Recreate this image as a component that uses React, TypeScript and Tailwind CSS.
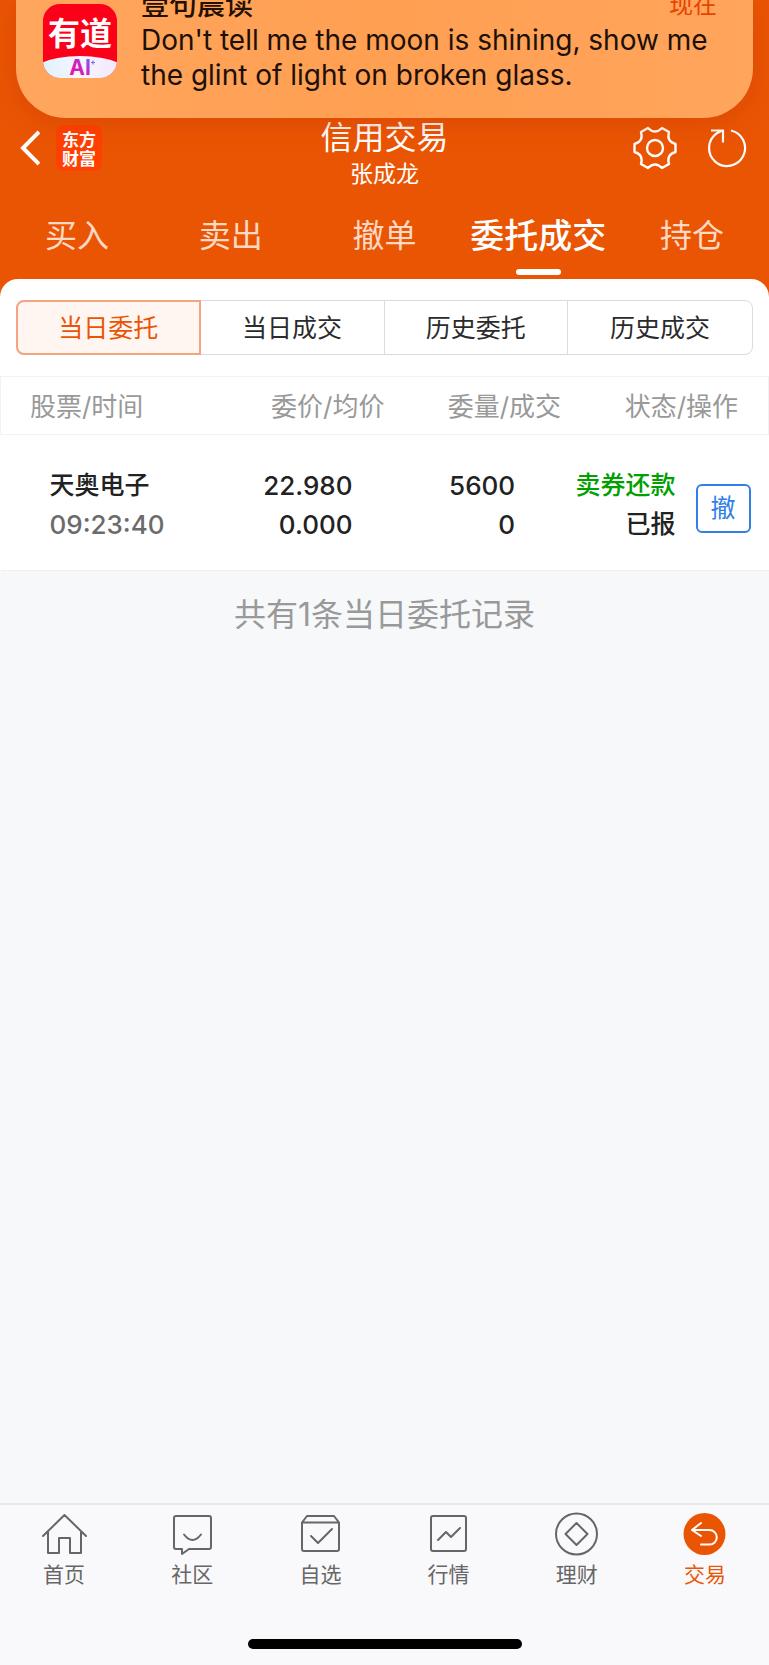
import type { ReactNode } from "react";

const tabs = ["买入", "卖出", "撤单", "委托成交", "持仓"];
const filters = ["当日委托", "当日成交", "历史委托", "历史成交"];

const orders = [
  {
    name: "天奥电子",
    time: "09:23:40",
    price: "22.980",
    average: "0.000",
    amount: "5600",
    filled: "0",
    type: "卖券还款",
    status: "已报",
  },
];

function Notification() {
  return (
    <div className="absolute inset-x-4 top-0 z-10 h-[118px] overflow-hidden rounded-b-[50px] bg-linear-to-r from-[#ffa65e] via-[#ff9f52] to-[#ffa55c] shadow-[0_4px_28px_rgba(190,50,0,0.35)]">
      <div className="flex gap-6 pr-8 pl-[27px]">
        <svg viewBox="0 0 74 74" className="mt-1 h-[74px] w-[74px] shrink-0" role="img" aria-label="有道">
          <defs>
            <clipPath id="youdao-clip">
              <rect width="74" height="74" rx="17" />
            </clipPath>
            <linearGradient id="youdao-base" x1="0" x2="1">
              <stop offset="0" stopColor="#d3f1fc" />
              <stop offset="0.5" stopColor="#f6f5ff" />
              <stop offset="1" stopColor="#f3e2fc" />
            </linearGradient>
            <linearGradient id="youdao-ai" x1="0" y1="1" x2="1" y2="0">
              <stop offset="0" stopColor="#f5109a" />
              <stop offset="0.5" stopColor="#d01fc0" />
              <stop offset="1" stopColor="#6f6bff" />
            </linearGradient>
          </defs>
          <g clipPath="url(#youdao-clip)">
            <rect width="74" height="74" fill="#fb0019" />
            <ellipse cx="37" cy="79" rx="58" ry="27" fill="url(#youdao-base)" />
          </g>
          <text x="37" y="41" textAnchor="middle" className="fill-white font-['Noto_Sans_CJK_SC',sans-serif] text-[32px] font-bold">
            有道
          </text>
          <text x="37" y="71" textAnchor="middle" fill="url(#youdao-ai)" className="font-['Inter',sans-serif] text-[21px] font-bold">
            AI
          </text>
          <path d="M50 56.500v4M48 58.500h4" stroke="#7f6cf5" strokeWidth="1.200" />
        </svg>
        <div className="min-w-0 flex-1 text-[28px]">
          <div className="-mt-[11px] mb-0.5 flex h-8 items-center justify-between">
            <span className="font-medium text-[#241000]">壹句晨读</span>
            <span className="pr-1 text-[24px] text-[#e84300]">现在</span>
          </div>
          <p className="font-['Inter',sans-serif] leading-[35px] text-[#1c1008]">
            Don&apos;t tell me the moon is shining, show me the glint of light on broken glass.
          </p>
        </div>
      </div>
    </div>
  );
}

function Header() {
  return (
    <header className="bg-[#ea5504] pt-[120px] text-white">
      <div className="flex items-start px-5">
        <div className="flex h-14 flex-1 items-center gap-4">
          <button aria-label="返回">
            <svg viewBox="0 0 20 36" className="h-9 w-5" fill="none" stroke="currentColor" strokeWidth="4">
              <path d="M19 2 3 18l16 16" />
            </svg>
          </button>
          <a href="#" className="grid h-[46px] w-[46px] place-content-center rounded-lg bg-[#ff4003] text-center font-['Noto_Sans_CJK_SC',sans-serif] text-[17px] leading-[19px] font-bold">
            东方
            <br />
            财富
          </a>
        </div>
        <div className="text-center">
          <h1 className="text-[32px] leading-9">信用交易</h1>
          <p className="mt-1 text-[23px] leading-7">张成龙</p>
        </div>
        <div className="flex h-14 flex-1 items-center justify-end gap-7">
          <button aria-label="设置">
            <svg viewBox="0 0 44 44" className="h-11 w-11" fill="none" stroke="currentColor" strokeWidth="2.400" strokeLinejoin="round">
              <path d="M15 2Q22 9 29 2L36 6Q33.300 15.500 42.500 18V26Q33.300 28.500 36 38L29 42Q22 35 15 42L8 38Q10.700 28.500 1.500 26V18Q10.700 15.500 8 6Z" />
              <circle cx="22" cy="22" r="8" />
            </svg>
          </button>
          <button aria-label="刷新">
            <svg viewBox="0 0 44 44" className="h-11 w-11" fill="none" stroke="currentColor" strokeWidth="2.200">
              <path d="M26 4.500A18 18 0 1 1 11.500 7.500L17 4.500M6 4.500h12v12" />
            </svg>
          </button>
        </div>
      </div>
      <nav className="grid grid-cols-5 pt-6">
        {tabs.map((tab) => {
          const active = tab === "委托成交";
          return (
            <button key={tab} className="flex flex-col items-center pb-1">
              <span className={active ? "text-[34px] leading-12 font-medium whitespace-nowrap" : "text-[32px] leading-12 text-[#ffd9c4]"}>
                {tab}
              </span>
              {active && <span className="mt-[9px] h-1.5 w-[45px] rounded-full bg-white" />}
            </button>
          );
        })}
      </nav>
    </header>
  );
}

function Filters() {
  return (
    <div className="mx-4 grid grid-cols-4 divide-x divide-[#d8dbe3] rounded-lg border border-[#d8dbe3]">
      {filters.map((label, i) => (
        <button
          key={label}
          className={
            i === 0
              ? "-my-px -ml-px h-[55px] rounded-l-lg border-2 border-[#f3a583] bg-[#fff5f1] pt-0.5 text-[25px] text-[#ea5504]"
              : "pt-0.5 text-[25px] text-[#2b2b2b]"
          }
        >
          {label}
        </button>
      ))}
    </div>
  );
}

function OrderTable() {
  return (
    <table className="mt-[21px] w-full table-fixed">
      <colgroup>
        <col className="w-[26%]" />
        <col className="w-[24%]" />
        <col className="w-[23%]" />
        <col className="w-[27%]" />
      </colgroup>
      <thead className="border border-[#f2f2f4]">
        <tr className="h-[58px] text-[26px] text-[#999]">
          <th className="pt-0.5 pl-[29px] text-left font-normal">股票/时间</th>
          <th className="pt-0.5 text-right font-normal">委价/均价</th>
          <th className="pt-0.5 text-right font-normal">委量/成交</th>
          <th className="pt-0.5 pr-[30px] text-right font-normal">状态/操作</th>
        </tr>
      </thead>
      <tbody>
        {orders.map((o) => (
          <tr key={o.time} className="h-[136px] border-b border-[#eeeff1] text-[26px] leading-[39px] font-medium text-[#222]">
            <td className="pt-1 pl-[49px]">
              <div className="text-[25px]">{o.name}</div>
              <div className="text-[#6b6b6b]">{o.time}</div>
            </td>
            <td className="pt-1 pr-8 text-right">
              <div>{o.price}</div>
              <div>{o.average}</div>
            </td>
            <td className="pt-1 pr-[46px] text-right">
              <div>{o.amount}</div>
              <div>{o.filled}</div>
            </td>
            <td className="pt-1 pr-[18px] text-[25px]">
              <div className="flex items-center justify-end gap-5">
                <div className="text-right">
                  <div className="text-[#00a000]">{o.type}</div>
                  <div>{o.status}</div>
                </div>
                <button className="mt-2 h-[49px] w-[55px] rounded-md border-2 border-[#3080e8] font-normal text-[#3080e8]">撤</button>
              </div>
            </td>
          </tr>
        ))}
      </tbody>
    </table>
  );
}

const navItems: { label: string; icon: ReactNode }[] = [
  {
    label: "首页",
    icon: <path d="M1 24 22.500 3 44 24M6 20v21h11V26h11v15h11V20" />,
  },
  {
    label: "社区",
    icon: (
      <>
        <path d="M6 4h33q2 0 2 2v29q0 2-2 2H19l-7 5v-5H6q-2 0-2-2V6q0-2 2-2z" />
        <path d="M14 22.500q8.500 11 17 0" />
      </>
    ),
  },
  {
    label: "自选",
    icon: (
      <>
        <path d="M4 10.500 9 4h27l5 6.500V37q0 2-2 2H6q-2 0-2-2zM4 10.500h37" />
        <path d="m13 24 7 7 14-14" />
      </>
    ),
  },
  {
    label: "行情",
    icon: (
      <>
        <rect x="5" y="4" width="35" height="35" rx="2" />
        <path d="m12 28 8-8 5 5 9-9" />
      </>
    ),
  },
  {
    label: "理财",
    icon: (
      <>
        <circle cx="22.500" cy="22" r="20.500" />
        <path d="m22.500 11 11 11-11 11-11-11z" />
      </>
    ),
  },
  {
    label: "交易",
    icon: (
      <>
        <circle cx="22.500" cy="22" r="21" fill="#ea5504" stroke="none" />
        <path stroke="#fff" d="m19 11-9 7 9 6M10 18h17.500a7.300 7.300 0 0 1 0 14.600H19" />
      </>
    ),
  },
];

function BottomNav() {
  return (
    <footer className="border-t-2 border-[#e8e9eb] bg-[#f9f9fb] pb-4">
      <nav className="grid grid-cols-6 pt-[7px]">
        {navItems.map(({ label, icon }) => (
          <a
            key={label}
            href="#"
            className={`flex flex-col items-center text-[21px] leading-7 ${label === "交易" ? "text-[#ea5504]" : "text-[#666]"}`}
          >
            <svg viewBox="0 0 45 45" className="mb-1 h-[45px] w-[45px]" fill="none" stroke="currentColor" strokeWidth="2" strokeLinejoin="round" strokeLinecap="round">
              {icon}
            </svg>
            {label}
          </a>
        ))}
      </nav>
      <div className="mx-auto mt-[50px] h-2.5 w-[274px] rounded-full bg-black" />
    </footer>
  );
}

export default function App() {
  return (
    <div className="relative flex min-h-screen flex-col bg-[#f7f8fa] font-['Inter','Noto_Sans_CJK_SC',sans-serif]">
      <Notification />
      <Header />
      <main className="flex-1">
        <div className="bg-[#ea5504]">
          <div className="rounded-t-[18px] bg-white pt-[21px]">
            <Filters />
            <OrderTable />
          </div>
        </div>
        <p className="mt-6 text-center text-[32px] leading-10 text-[#999]">共有1条当日委托记录</p>
      </main>
      <BottomNav />
    </div>
  );
}
